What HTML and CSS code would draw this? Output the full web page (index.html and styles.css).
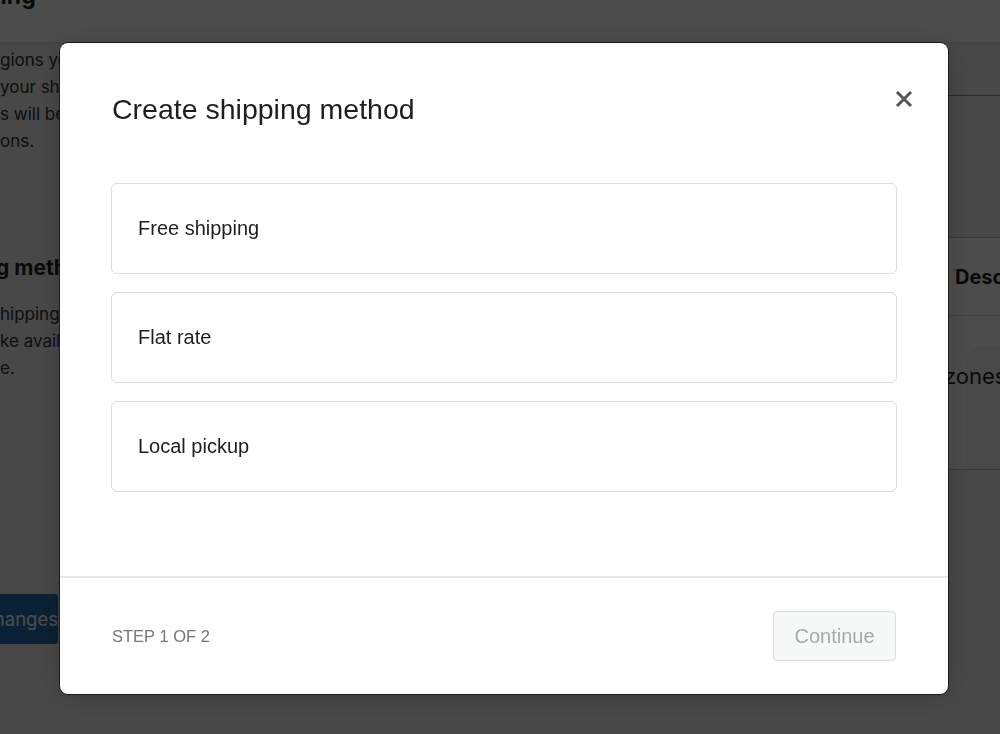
FILE: index.html
```html
<!DOCTYPE html>
<html lang="en">
<head>
<meta charset="utf-8">
<title>Create shipping method</title>
<link rel="stylesheet" href="styles.css">
</head>
<body>
<div class="page">
  <header class="topbar"><h1 class="topbar-title">Shipping</h1></header>
  <div class="content">
    <div class="left">
      <div class="para">
        <div class="ln">gions you ship to</div>
        <div class="ln">your shipping</div>
        <div class="ln">s will be</div>
        <div class="ln">ons.</div>
      </div>
      <h2 class="sub">g methods</h2>
      <div class="para para-2">
        <div class="ln">hipping methods</div>
        <div class="ln">ke available</div>
        <div class="ln">e.</div>
      </div>
      <button class="save">hanges</button>
    </div>
    <div class="right">
      <div class="tabs"></div>
      <div class="table">
        <div class="thead"><span class="th-spacer"></span><span class="th">Description</span></div>
        <div class="trow">
          <span class="row-text">zones</span>
          <span class="illus"></span>
        </div>
      </div>
    </div>
  </div>
</div>

<div class="overlay"></div>

<div class="modal" role="dialog" aria-labelledby="mtitle">
  <div class="modal-head">
    <h2 class="modal-title" id="mtitle">Create shipping method</h2>
    <button class="close" aria-label="Close">
      <svg width="18" height="18" viewBox="0 0 18 18"><path d="M2 2 L16 16 M16 2 L2 16" stroke="#555" stroke-width="3" stroke-linecap="butt"/></svg>
    </button>
  </div>
  <div class="modal-body">
    <div class="option">Free shipping</div>
    <div class="option">Flat rate</div>
    <div class="option">Local pickup</div>
  </div>
  <div class="modal-foot">
    <span class="step">STEP 1 OF 2</span>
    <button class="continue" disabled>Continue</button>
  </div>
</div>
</body>
</html>
```

FILE: styles.css
```css
* { box-sizing: border-box; }
html, body { margin: 0; padding: 0; }
body {
  width: 1000px;
  height: 734px;
  overflow: hidden;
  background: #f0f0f0;
  font-family: Inter, "Liberation Sans", sans-serif;
  color: #1e1e1e;
}
.page { height: 734px; width: 1000px; overflow: hidden; display: flex; flex-direction: column; }
.topbar {
  height: 42px;
  flex-shrink: 0;
  background: #ffffff;
  overflow: hidden;
  box-shadow: 0 1px 3px rgba(0,0,0,0.15);
  position: relative;
  z-index: 1;
}
.topbar-title {
  margin: -18px 0 0 -64px;
  font-size: 23px;
  font-weight: 700;
  line-height: 28px;
}
.content { flex: 1; display: grid; grid-template-columns: 480px 520px; overflow: hidden; }
.left { padding-top: 5px; overflow: hidden; }
.para { font-size: 17px; line-height: 27px; color: #2c3338; }
.ln { white-space: nowrap; }
.sub {
  margin: 99px 0 0 -4px;
  font-size: 21px;
  font-weight: 700;
  line-height: 28px;
  white-space: nowrap;
}
.para-2 { margin-top: 19px; }
.save {
  display: block;
  margin-top: 212px;
  margin-left: -30px;
  height: 50px;
  width: 88px;
  border: 0;
  border-radius: 3px;
  background: #2271b1;
  color: #fff;
  font: 18.5px Inter, "Liberation Sans", sans-serif;
  text-align: right;
  padding: 0;
  white-space: nowrap;
}
.tabs { height: 54px; border-bottom: 1px solid #8c8f94; }
.table {
  margin-top: 141px;
  background: #fff;
  border-top: 1px solid #c3c4c7;
  border-bottom: 1px solid #c3c4c7;
}
.thead {
  height: 78px;
  display: flex;
  align-items: center;
  border-bottom: 1px solid #dcdcde;
  font-size: 20px;
  font-weight: 700;
}
.th-spacer { width: 475px; flex-shrink: 0; }
.th { white-space: nowrap; }
.trow {
  height: 153px;
  position: relative;
  display: flex;
  align-items: flex-start;
  padding-top: 47px;
  padding-left: 464px;
  font-size: 22px;
  overflow: hidden;
}
.row-text { white-space: nowrap; position: relative; z-index: 1; }
.illus {
  position: absolute;
  left: 485px;
  top: 30px;
  width: 60px;
  height: 124px;
  background: #f6f6f6;
  border-radius: 18px 18px 0 0;
}

.overlay {
  position: fixed;
  inset: 0;
  background: rgba(0,0,0,0.7);
  z-index: 10;
}

.modal {
  position: fixed;
  z-index: 11;
  left: 60px;
  top: 43px;
  width: 888px;
  height: 651px;
  background: #fff;
  border-radius: 8px;
  box-shadow: 0 0 0 1px rgba(0,0,0,0.55), 0 3px 30px rgba(0,0,0,0.2);
  display: flex;
  flex-direction: column;
  font-family: "Liberation Sans", Arial, sans-serif;
}
.modal-head {
  display: flex;
  justify-content: space-between;
  align-items: flex-start;
  padding: 49px 26px 0 52px;
}
.modal-title {
  margin: 0;
  font-size: 28.5px;
  font-weight: 400;
  line-height: 34px;
  color: #1e1e1e;
}
.close {
  margin-top: -11px;
  width: 36px;
  height: 36px;
  border: 0;
  background: none;
  padding: 0;
  display: flex;
  align-items: center;
  justify-content: center;
  cursor: pointer;
}
.modal-body {
  flex: 1;
  display: flex;
  flex-direction: column;
  gap: 18px;
  padding: 57px 51px 0 51px;
}
.option {
  height: 91px;
  border: 1px solid #dcdcde;
  border-radius: 6px;
  display: flex;
  align-items: center;
  padding-left: 26px;
  font-size: 20px;
  color: #1e1e1e;
}
.modal-foot {
  height: 118px;
  border-top: 2px solid #e6e6e6;
  display: flex;
  align-items: center;
  justify-content: space-between;
  padding: 0 52px 0 52px;
}
.step { font-size: 16.5px; color: #757575; }
.continue {
  width: 123px;
  height: 50px;
  background: #f6f7f7;
  border: 1px solid #dcdcde;
  border-radius: 4px;
  color: #a7aaad;
  font: 20px "Liberation Sans", Arial, sans-serif;
}
```
